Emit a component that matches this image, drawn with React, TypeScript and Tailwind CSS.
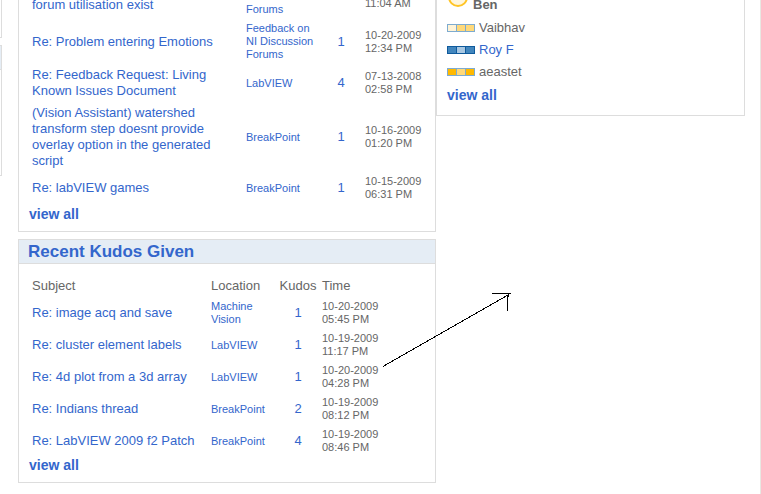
import type { ReactNode } from 'react';

interface KudosRow {
    subject: ReactNode;
    location: ReactNode;
    kudos: string;
    date: ReactNode;
    time: string;
}

interface Member {
    name: string;
    nameClass: string;
    frame: string;
    cells: [string, string, string];
}

const receivedRows: KudosRow[] = [
    {
        subject: 'Re: Problem entering Emotions',
        location: 'Feedback on NI Discussion Forums',
        kudos: '1',
        date: '10-20-2009',
        time: '12:34 PM',
    },
    {
        subject: 'Re: Feedback Request: Living Known Issues Document',
        location: 'LabVIEW',
        kudos: '4',
        date: '07-13-2008',
        time: '02:58 PM',
    },
    {
        subject:
            '(Vision Assistant) watershed transform step doesnt provide overlay option in the generated script',
        location: 'BreakPoint',
        kudos: '1',
        date: '10-16-2009',
        time: '01:20 PM',
    },
    {
        subject: 'Re: labVIEW games',
        location: 'BreakPoint',
        kudos: '1',
        date: '10-15-2009',
        time: '06:31 PM',
    },
];

const givenRows: KudosRow[] = [
    {
        subject: 'Re: image acq and save',
        location: 'Machine Vision',
        kudos: '1',
        date: '10-20-2009',
        time: '05:45 PM',
    },
    {
        subject: 'Re: cluster element labels',
        location: 'LabVIEW',
        kudos: '1',
        date: '10-19-2009',
        time: '11:17 PM',
    },
    {
        subject: 'Re: 4d plot from a 3d array',
        location: 'LabVIEW',
        kudos: '1',
        date: '10-20-2009',
        time: '04:28 PM',
    },
    {
        subject: 'Re: Indians thread',
        location: 'BreakPoint',
        kudos: '2',
        date: '10-19-2009',
        time: '08:12 PM',
    },
    {
        subject: 'Re: LabVIEW 2009 f2 Patch',
        location: 'BreakPoint',
        kudos: '4',
        date: '10-19-2009',
        time: '08:46 PM',
    },
];

const members: Member[] = [
    {
        name: 'Vaibhav',
        nameClass: 'text-[#666666]',
        frame: '#7dabd0',
        cells: ['#fff3d6', '#ffd97a', '#ffd97a'],
    },
    {
        name: 'Roy F',
        nameClass: 'text-[#3366cc]',
        frame: '#0f5a9c',
        cells: ['#4286bd', '#a9c8e2', '#4286bd'],
    },
    {
        name: 'aeastet',
        nameClass: 'text-[#666666]',
        frame: '#7dabd0',
        cells: ['#ffb900', '#ffd97a', '#ffb900'],
    },
];

const RankIcon = ({ frame, cells }: { frame: string; cells: string[] }) => (
    <svg width="28" height="8" viewBox="0 0 28 8" shapeRendering="crispEdges">
        <rect width="28" height="8" fill={frame} />
        <rect x="1" y="1" width="8" height="6" fill={cells[0]} />
        <rect x="10" y="1" width="8" height="6" fill={cells[1]} />
        <rect x="19" y="1" width="8" height="6" fill={cells[2]} />
    </svg>
);

const ViewAll = () => (
    <a href="#" className="block text-[14px] leading-4 font-bold text-[#3366cc]">
        view all
    </a>
);

const Row = ({ subject, location, kudos, date, time }: KudosRow) => (
    <tr>
        <td className="py-[3px] pr-2 leading-4">
            <a href="#" className="text-[#3366cc]">
                {subject}
            </a>
        </td>
        <td className="py-[3px] text-[11px] leading-[13px]">
            <a href="#" className="text-[#3366cc]">
                {location}
            </a>
        </td>
        <td className="py-[3px] text-center leading-4 text-[#3366cc]">{kudos}</td>
        <td className="py-[3px] pl-[5px] text-[11px] leading-[13px]">
            {date}
            <br />
            {time}
        </td>
    </tr>
);

function ReceivedPanel() {
    return (
        <section className="border border-[#dddddd] pb-[9px] pl-[10px]">
            <table className="mb-[2px] ml-[3px] table-fixed text-[13px]">
                <colgroup>
                    <col className="w-[214px]" />
                    <col className="w-[76px]" />
                    <col className="w-[38px]" />
                    <col className="w-[72px]" />
                </colgroup>
                <tbody>
                    <Row
                        subject={<><br />forum utilisation exist</>}
                        location={<><br /><br />Forums</>}
                        kudos=""
                        date=""
                        time="11:04 AM"
                    />
                    {receivedRows.map((row) => (
                        <Row key={row.time} {...row} />
                    ))}
                </tbody>
            </table>
            <ViewAll />
        </section>
    );
}

function GivenPanel() {
    return (
        <section className="border border-[#dddddd]">
            <h2 className="border-b border-[#dddddd] bg-[#e5edf5] pl-[9px] text-[17px] leading-[23px] font-bold text-[#3366cc]">
                Recent Kudos Given
            </h2>
            <div className="pt-3 pb-[9px] pl-[10px]">
                <table className="ml-[3px] table-fixed text-[13px]">
                    <colgroup>
                        <col className="w-[179px]" />
                        <col className="w-[68px]" />
                        <col className="w-[38px]" />
                        <col className="w-[72px]" />
                    </colgroup>
                    <thead>
                        <tr className="text-left leading-4">
                            <th className="pt-[2px] pb-[3px] font-normal">Subject</th>
                            <th className="pt-[2px] pb-[3px] font-normal">Location</th>
                            <th className="pt-[2px] pb-[3px] text-center font-normal">Kudos</th>
                            <th className="pt-[2px] pb-[3px] pl-[5px] font-normal">Time</th>
                        </tr>
                    </thead>
                    <tbody>
                        {givenRows.map((row) => (
                            <Row key={row.time} {...row} />
                        ))}
                    </tbody>
                </table>
                <ViewAll />
            </div>
        </section>
    );
}

function MembersPanel() {
    return (
        <section className="border border-[#dddddd] px-[10px] pt-5 pb-2 text-[13px]">
            <ul>
                <li className="mb-px flex h-[22px] items-center gap-1 font-bold">
                    <svg width="22" height="22" viewBox="0 0 22 22" className="-mt-4">
                        <circle cx="11" cy="11" r="9" fill="#fff6dd" stroke="#ffc425" strokeWidth="2" />
                    </svg>
                    Ben
                </li>
                {members.map((member) => (
                    <li key={member.name} className="flex h-[22px] items-center gap-1">
                        <RankIcon frame={member.frame} cells={member.cells} />
                        <a href="#" className={member.nameClass}>
                            {member.name}
                        </a>
                    </li>
                ))}
            </ul>
            <div className="py-1">
                <ViewAll />
            </div>
        </section>
    );
}

function App() {
    return (
        <div className="relative min-h-screen overflow-hidden border-r border-[#e8e8e2] bg-white font-['Liberation_Sans',Arial,sans-serif] text-[#666666]">
            <div className="-mt-[27px] flex items-start">
                <div className="mr-4 w-[2px] shrink-0">
                    <div className="h-[65px] border-r border-b border-[#dddddd]" />
                    <div className="mt-[7px] h-[131px] border border-l-0 border-[#dddddd]">
                        <div className="h-6 border-b border-[#dddddd] bg-[#e5edf5]" />
                    </div>
                </div>
                <div className="flex w-[418px] shrink-0 flex-col gap-[7px]">
                    <ReceivedPanel />
                    <GivenPanel />
                </div>
                <div className="mr-[15px] grow">
                    <MembersPanel />
                </div>
            </div>

            {/* hand-drawn arrow over the page */}
            <svg
                width="130"
                height="76"
                viewBox="0 0 130 76"
                className="absolute top-[292px] left-[382px]"
                fill="none"
                stroke="#000000"
                shapeRendering="crispEdges">
                <path d="M1 74.5L127 2.500M110 1.500H129M125.500 4V19M126.500 2V5" />
            </svg>
        </div>
    );
}

export default App;
